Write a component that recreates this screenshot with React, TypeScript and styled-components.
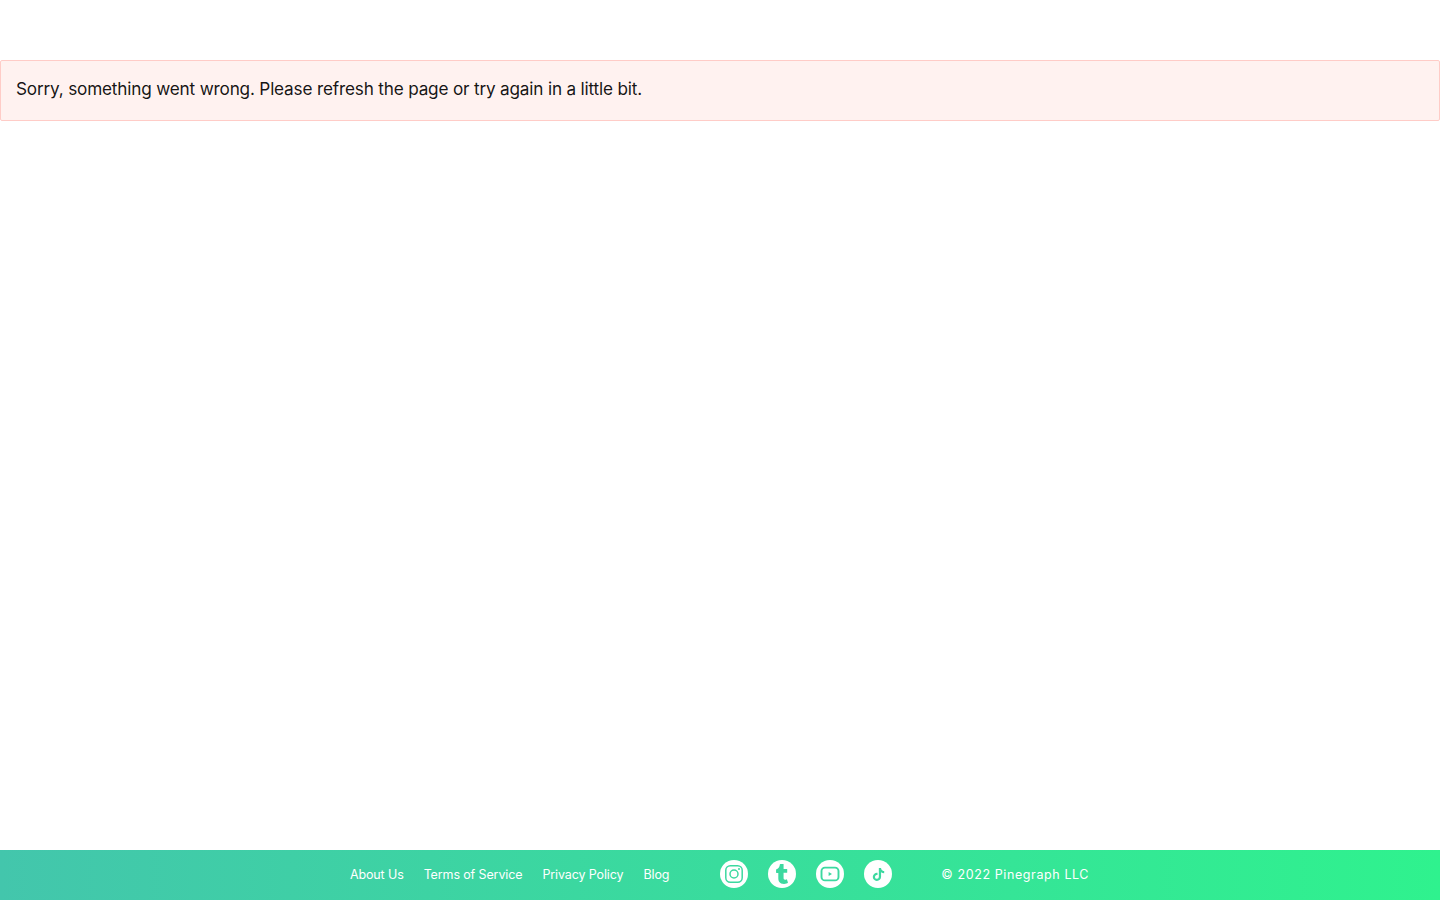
import { ReactNode } from 'react';
import styled, { createGlobalStyle } from 'styled-components';
import { FaTiktok, FaTumblr } from 'react-icons/fa';

const GlobalStyle = createGlobalStyle`
  html, body {
    margin: 0;
    padding: 0;
    background: #fff;
  }
  * {
    box-sizing: border-box;
  }
`;

const Page = styled.div`
  display: flex;
  flex-direction: column;
  min-height: 100vh;
  font-family: 'Inter', 'Liberation Sans', sans-serif;
`;

const Main = styled.main`
  flex: 1;
  padding-top: 60px;
`;

const Alert = styled.div`
  height: 61px;
  padding: 16px 15px;
  background: #fff2f0;
  border: 1px solid #ffccc7;
  border-radius: 2px;
  color: rgba(0, 0, 0, 0.92);
  font-size: 17.2px;
  line-height: 23px;
  letter-spacing: -0.19px;
`;

const Footer = styled.footer`
  height: 50px;
  padding: 0 1px 2px 0;
  display: flex;
  align-items: center;
  justify-content: center;
  gap: 50px;
  background: linear-gradient(to right, #43c6ac, #2ff28e);
  color: #fff;
`;

const Links = styled.nav`
  display: flex;
  gap: 20px;
  padding-top: 2px;
`;

const FooterLink = styled.a`
  color: #fff;
  font-size: 12.5px;
  font-weight: 400;
  line-height: 20px;
  letter-spacing: -0.12px;
  text-decoration: none;
`;

const Socials = styled.div`
  display: flex;
  gap: 20px;
  margin: 0 -1px 0 1px;
`;

const Social = styled.a`
  width: 28px;
  height: 28px;
  border-radius: 50%;
  background: #fff;
  color: #3cd9a0;
  display: flex;
  align-items: center;
  justify-content: center;
`;

const Copyright = styled.div`
  padding-top: 1px;
  font-size: 12.5px;
  font-weight: 400;
  line-height: 20px;
  letter-spacing: 0.6px;
`;

function SocialIcon({ children }: { children: ReactNode }) {
  return <Social href="#">{children}</Social>;
}

export default function App() {
  return (
    <Page>
      <GlobalStyle />
      <Main>
        <Alert>Sorry, something went wrong. Please refresh the page or try again in a little bit.</Alert>
      </Main>
      <Footer>
        <Links>
          <FooterLink href="#">About Us</FooterLink>
          <FooterLink href="#">Terms of Service</FooterLink>
          <FooterLink href="#">Privacy Policy</FooterLink>
          <FooterLink href="#">Blog</FooterLink>
        </Links>
        <Socials>
          <SocialIcon>
            <svg width="20" height="20" viewBox="0 0 20 20" fill="none" stroke="currentColor" strokeWidth="1.5">
              <rect x="1.8" y="1.8" width="16.4" height="16.4" rx="4.5" />
              <circle cx="10" cy="10" r="4" />
              <circle cx="15" cy="5" r="1" fill="currentColor" stroke="none" />
            </svg>
          </SocialIcon>
          <SocialIcon>
            <FaTumblr size={20} />
          </SocialIcon>
          <SocialIcon>
            <svg width="20" height="20" viewBox="0 0 20 20" fill="none">
              <rect x="1.5" y="3.6" width="17" height="12.8" rx="3.5" stroke="currentColor" strokeWidth="1.9" />
              <path d="M8.6 8 L12 10 L8.6 12 Z" fill="currentColor" />
            </svg>
          </SocialIcon>
          <SocialIcon>
            <FaTiktok size={13} />
          </SocialIcon>
        </Socials>
        <Copyright>© 2022 Pinegraph LLC</Copyright>
      </Footer>
    </Page>
  );
}
